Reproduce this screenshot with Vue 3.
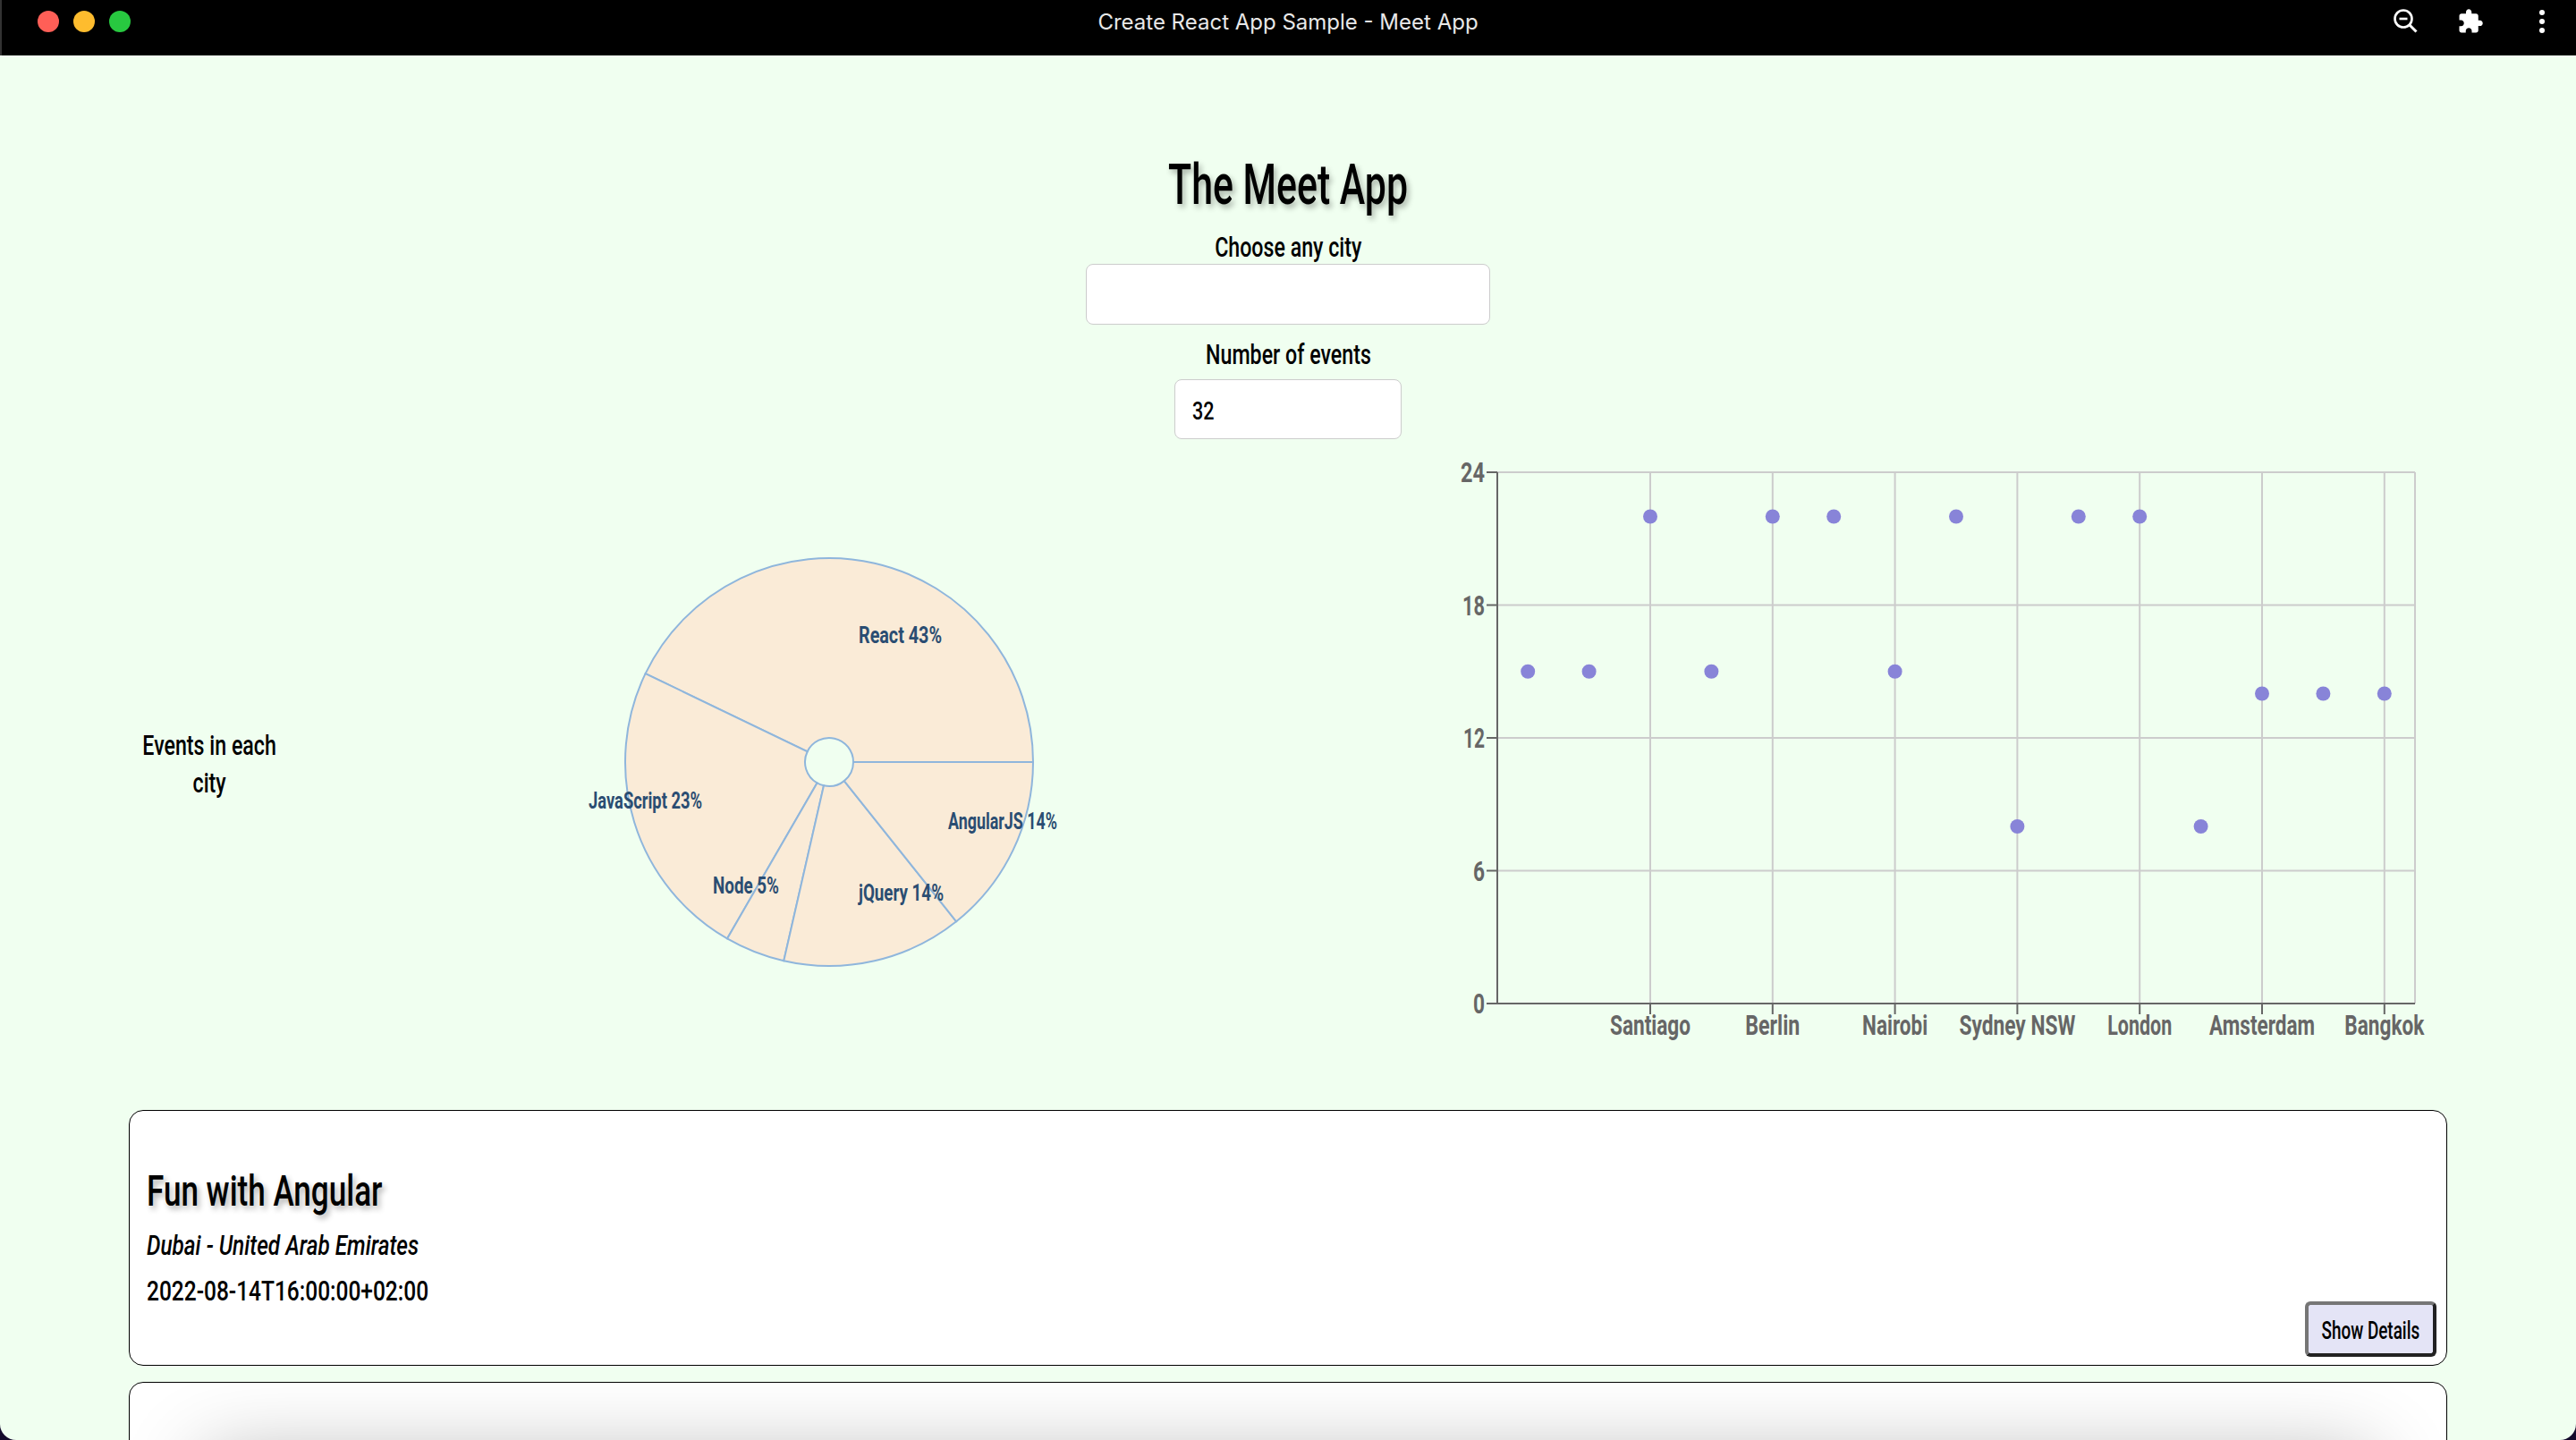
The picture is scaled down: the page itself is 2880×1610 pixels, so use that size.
<script setup>
const cities = [
  { x: 1, v: 15 }, { x: 2, v: 15 }, { x: 3, v: 22, name: 'Santiago', w: 90 }, { x: 4, v: 15 },
  { x: 5, v: 22, name: 'Berlin', w: 61 }, { x: 6, v: 22 }, { x: 7, v: 15, name: 'Nairobi', w: 73 },
  { x: 8, v: 22 }, { x: 9, v: 8, name: 'Sydney NSW', w: 130 }, { x: 10, v: 22 }, { x: 11, v: 22, name: 'London', w: 72 },
  { x: 12, v: 8 }, { x: 13, v: 14, name: 'Amsterdam', w: 118 }, { x: 14, v: 14 }, { x: 15, v: 14, name: 'Bangkok', w: 89 },
]
const band = 1026 / 15
const cx = (i) => 74 + band * (i - 0.5)
const cy = (v) => 28 + 594 * (1 - v / 24)
const yTicks = [
  { v: 24, w: 27 }, { v: 18, w: 25 }, { v: 12, w: 24 }, { v: 6, w: 13 }, { v: 0, w: 13 },
]
const ticked = cities.filter((c) => c.name)

const genres = [
  { label: 'React 43%', n: 9, x: 262, y: 119, w: 93 },
  { label: 'JavaScript 23%', n: 5, x: -40, y: 304, w: 127 },
  { label: 'Node 5%', n: 1, x: 99, y: 399, w: 74 },
  { label: 'jQuery 14%', n: 3, x: 262, y: 407, w: 95 },
  { label: 'AngularJS 14%', n: 3, x: 362, y: 327, w: 122 },
]
const total = 21
const c = { x: 229, y: 252 }
const pt = (r, a) => [c.x + r * Math.cos(a), c.y - r * Math.sin(a)]
let start = 0
const slices = genres.map((g) => {
  const end = start + (g.n / total) * Math.PI * 2
  const large = end - start > Math.PI ? 1 : 0
  const [x1, y1] = pt(228, start)
  const [x2, y2] = pt(228, end)
  const [x3, y3] = pt(27, end)
  const [x4, y4] = pt(27, start)
  const d = `M${x1} ${y1}A228 228 0 ${large} 0 ${x2} ${y2}L${x3} ${y3}A27 27 0 ${large} 1 ${x4} ${y4}Z`
  start = end
  return { ...g, d }
})
</script>

<template>
  <div class="window">
    <header class="titlebar">
      <div class="lights">
        <span class="light red"></span>
        <span class="light yellow"></span>
        <span class="light green"></span>
      </div>
      <span class="title">Create React App Sample - Meet App</span>
      <div class="actions">
        <svg width="30" height="30" viewBox="0 0 30 30" fill="none" stroke="#fff" stroke-width="2.6">
          <circle cx="12" cy="12" r="9.5" />
          <path d="M7.5 12h9" />
          <path d="M19 19l7.5 7.5" stroke-width="3" />
        </svg>
        <svg width="30" height="30" viewBox="0 0 24 24" fill="#fff">
          <path d="M20.5 11H19V7c0-1.1-.9-2-2-2h-4V3.5C13 2.12 11.88 1 10.5 1S8 2.12 8 3.5V5H4c-1.1 0-1.99.9-1.99 2v3.8H3.5c1.49 0 2.7 1.21 2.7 2.7s-1.21 2.7-2.7 2.7H2V20c0 1.1.9 2 2 2h3.8v-1.5c0-1.49 1.21-2.7 2.7-2.7 1.49 0 2.7 1.21 2.7 2.7V22H17c1.1 0 2-.9 2-2v-4h1.5c1.38 0 2.5-1.12 2.5-2.5S21.88 11 20.5 11z" />
        </svg>
        <svg class="kebab" width="10" height="30" viewBox="0 0 10 30" fill="#fff">
          <circle cx="5" cy="5" r="3" />
          <circle cx="5" cy="15" r="3" />
          <circle cx="5" cy="25" r="3" />
        </svg>
      </div>
    </header>

    <main class="app">
      <h1 class="heading"><span>The Meet App</span></h1>
      <label class="field-label city-label"><span>Choose any city</span></label>
      <input class="city-input" type="text" />
      <label class="field-label number-label"><span>Number of events</span></label>
      <div class="number-input"><span>32</span></div>

      <section class="data-vis">
        <h4 class="vis-title"><span>Events in each<br />city</span></h4>
        <svg class="pie" width="520" height="504" viewBox="0 0 520 504">
          <path v-for="s in slices" :key="s.label" :d="s.d" fill="#faebd7" stroke="#8fb6dc" stroke-width="2" />
          <text
            v-for="s in slices"
            :key="s.label + 't'"
            :x="s.x"
            :y="s.y"
            :textLength="s.w"
            lengthAdjust="spacingAndGlyphs"
            class="pie-label"
          >{{ s.label }}</text>
        </svg>
        <svg class="scatter" width="1200" height="670" viewBox="0 0 1200 670">
          <line v-for="t in yTicks.slice(0, 4)" :key="t.v" x1="74" x2="1100" :y1="cy(t.v)" :y2="cy(t.v)" class="grid" />
          <line v-for="t in ticked" :key="t.x" :x1="cx(t.x)" :x2="cx(t.x)" y1="28" y2="622" class="grid" />
          <line x1="1100" x2="1100" y1="28" y2="622" class="grid" />
          <circle v-for="p in cities" :key="p.x" :cx="cx(p.x)" :cy="cy(p.v)" r="8" fill="#8884d8" />
          <line x1="74" x2="74" y1="28" y2="622" class="axis" />
          <line x1="74" x2="1100" y1="622" y2="622" class="axis" />
          <g v-for="t in yTicks" :key="'y' + t.v">
            <line x1="62" x2="74" :y1="cy(t.v)" :y2="cy(t.v)" class="axis" />
            <text
              :x="60 - t.w"
              :y="cy(t.v) + 11"
              :textLength="t.w"
              lengthAdjust="spacingAndGlyphs"
              class="tick"
            >{{ t.v }}</text>
          </g>
          <g v-for="t in ticked" :key="'x' + t.x">
            <line :x1="cx(t.x)" :x2="cx(t.x)" y1="622" y2="634" class="axis" />
            <text
              :x="cx(t.x) - t.w / 2"
              y="657"
              :textLength="t.w"
              lengthAdjust="spacingAndGlyphs"
              class="tick"
            >{{ t.name }}</text>
          </g>
        </svg>
      </section>

      <article class="event">
        <h2 class="event-name"><span>Fun with Angular</span></h2>
        <p class="event-place"><span>Dubai - United Arab Emirates</span></p>
        <p class="event-date"><span>2022-08-14T16:00:00+02:00</span></p>
        <button class="details-btn"><span>Show Details</span></button>
      </article>
      <article class="event next"></article>
    </main>
  </div>
</template>

<style>
html, body {
  margin: 0;
  height: 1610px;
  overflow: hidden;
  background: #140a2c;
}
</style>

<style scoped>
.window {
  width: 2880px;
  height: 1610px;
  overflow: hidden;
  background: #f0fff0;
  border-radius: 0 0 18px 18px;
  font-family: Roboto, sans-serif;
  font-weight: 500;
  color: #000;
}

span {
  display: inline-block;
  white-space: nowrap;
}

.titlebar {
  height: 62px;
  background: #000;
  box-shadow: inset 2px 0 #333;
  position: relative;
  display: flex;
  align-items: center;
  justify-content: center;
}

.lights {
  position: absolute;
  left: 42px;
  top: 12px;
  display: flex;
  gap: 16px;
}

.light {
  width: 24px;
  height: 24px;
  border-radius: 50%;
}

.red { background: #ff5f57; }
.yellow { background: #febc2e; }
.green { background: #28c840; }

.title {
  font-family: Inter, sans-serif;
  font-weight: 400;
  font-size: 24px;
  color: #e8e8e8;
  position: relative;
  top: -7px;
}

.actions {
  position: absolute;
  top: 9px;
  left: 2675px;
  display: flex;
  gap: 42px;
  align-items: center;
}

.kebab {
  margin-left: 18px;
}

.app {
  display: flex;
  flex-direction: column;
  align-items: center;
}

.heading {
  margin: 109px 0 0;
  font-size: 63px;
  line-height: 72px;
  font-weight: 500;
  text-shadow: 4px 4px 8px rgba(0, 0, 0, 0.3);
}

.heading span {
  transform: scaleX(0.68);
}

.field-label {
  font-size: 32px;
  line-height: 38px;
}

.field-label span,
.vis-title span {
  transform: scaleX(0.725);
}

.city-label { margin-top: 14px; }
.number-label { margin-top: 14px; }

.city-input,
.number-input {
  box-sizing: border-box;
  background: #fff;
  border: 1px solid #ccc;
  border-radius: 8px;
  outline: none;
  flex: none;
}

.city-input {
  width: 452px;
  height: 68px;
}

.number-input {
  width: 254px;
  height: 67px;
  margin-top: 9px;
  padding: 3px 0 0 19px;
  display: flex;
  align-items: center;
  font-size: 28px;
}

.number-input span {
  transform: scaleX(0.77);
  transform-origin: left;
}

.data-vis {
  width: 2880px;
  height: 670px;
  display: flex;
  align-items: flex-start;
  margin-top: 9px;
  flex: none;
}

.vis-title {
  width: 200px;
  margin: 312px 0 0 131px;
  font-size: 32px;
  line-height: 42px;
  font-weight: 500;
  text-align: center;
}

.pie {
  margin: 100px 0 0 367px;
  overflow: visible;
  flex: none;
}

.pie-label {
  font-size: 25px;
  font-weight: 700;
  fill: #2a4d72;
}

.scatter {
  margin-left: 382px;
  flex: none;
}

.grid {
  stroke: #ccc;
  stroke-width: 2;
}

.axis {
  stroke: #666;
  stroke-width: 2;
}

.tick {
  font-size: 32px;
  font-weight: 700;
  fill: #666;
}

.event {
  box-sizing: border-box;
  position: relative;
  width: 2592px;
  height: 286px;
  margin-top: 71px;
  padding: 62px 19px 0;
  border: 1px solid #000;
  border-radius: 16px;
  background: #fff;
  flex: none;
}

.event-name {
  margin: 0;
  font-size: 48px;
  line-height: 56px;
  font-weight: 500;
  text-shadow: 4px 4px 8px rgba(0, 0, 0, 0.3);
}

.event-name span {
  transform: scaleX(0.73);
  transform-origin: left;
}

.event-place,
.event-date {
  margin: 0;
  font-size: 31px;
  line-height: 51px;
}

.event-place {
  margin-top: 7px;
  font-style: italic;
}

.event-place span {
  transform: scaleX(0.786);
  transform-origin: left;
}

.event-date span {
  transform: scaleX(0.79);
  transform-origin: left;
}

.details-btn {
  position: absolute;
  right: 11px;
  bottom: 9px;
  width: 147px;
  height: 62px;
  box-sizing: border-box;
  padding: 3px 0 0;
  display: flex;
  align-items: center;
  justify-content: center;
  background: #e4e4f6;
  border: 4px solid;
  border-color: #767676 #222 #222 #767676;
  border-radius: 6px;
  font-family: inherit;
  font-size: 27px;
  font-weight: 500;
}

.details-btn span {
  transform: scaleX(0.7);
}

.next {
  margin-top: 18px;
  overflow: hidden;
}

.next::after {
  content: '';
  position: absolute;
  left: 84px;
  right: 84px;
  top: 83px;
  height: 200px;
  box-shadow: 0 0 90px rgba(0, 0, 0, 0.3);
}
</style>
